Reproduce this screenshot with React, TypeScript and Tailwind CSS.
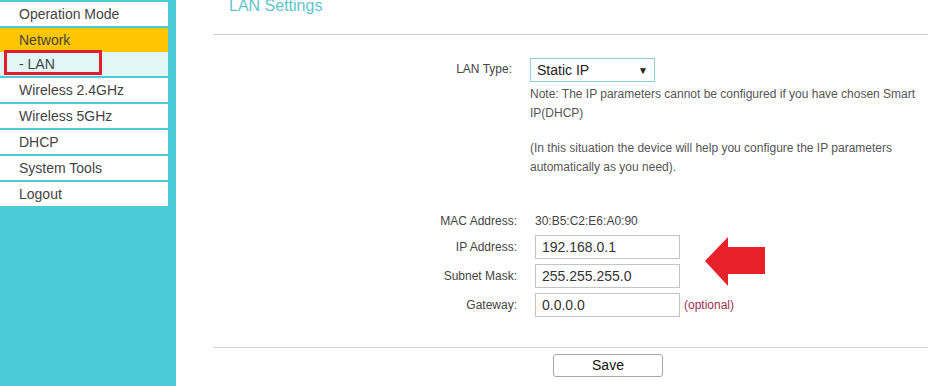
import React from 'react';

const menu = [
  { label: 'Operation Mode', kind: 'item' },
  { label: 'Network', kind: 'active' },
  { label: '- LAN', kind: 'sub' },
  { label: 'Wireless 2.4GHz', kind: 'item' },
  { label: 'Wireless 5GHz', kind: 'item' },
  { label: 'DHCP', kind: 'item' },
  { label: 'System Tools', kind: 'item' },
  { label: 'Logout', kind: 'item' },
];

function Sidebar() {
  return (
    <aside className="relative w-[176px] shrink-0 bg-[#4acbd6] pt-[2px] text-[14px]">
      <ul className="w-[168px]">
        {menu.map((m) => (
          <li
            key={m.label}
            className={
              m.kind === 'active'
                ? 'h-[24px] mt-[2px] pl-[19px] flex items-center bg-[#ffc600] text-[#444]'
                : m.kind === 'sub'
                ? 'h-[24px] pl-[19px] flex items-center bg-[#e2f6f8] text-[#444]'
                : 'h-[24px] mt-[2px] first:mt-0 pl-[19px] flex items-center bg-white text-[#444]'
            }
          >
            {m.label}
          </li>
        ))}
      </ul>
      {/* highlight box around the LAN entry */}
      <div className="absolute left-[4px] top-[50px] w-[98px] h-[25px] border-[3px] border-[#e0202e]" />
    </aside>
  );
}

function TextInput({ value }: { value: string }) {
  return (
    <div className="w-[145px] h-[24px] border border-[#c4c4c4] bg-white pl-[6px] flex items-center text-[14px] text-[#333]">
      {value}
    </div>
  );
}

function Row({ label, children, className = '' }: { label: string; children: React.ReactNode; className?: string }) {
  return (
    <div className={'flex items-center ' + className}>
      <div className="w-[304px] text-right text-[12px] text-[#444]">{label}</div>
      <div className="ml-[18px] flex items-center">{children}</div>
    </div>
  );
}

export default function App() {
  return (
    <div
      className="relative flex w-[928px] h-[386px] overflow-hidden bg-white"
      style={{ fontFamily: '"Liberation Sans", Arial, sans-serif' }}
    >
      <Sidebar />
      <main className="relative flex-1 pl-[37px]">
        <h1 className="pl-[16px] -mt-[7px] h-[42px] text-[16px] text-[#5ec5cd] leading-[26px] border-b border-[#cfcfcf]">
          LAN Settings
        </h1>

        <div className="flex items-start mt-[23px]">
          <div className="w-[299px] text-right text-[12px] text-[#444] leading-[23px]">LAN Type:</div>
          <div className="ml-[18px] w-[390px]">
            <div className="w-[125px] h-[24px] border border-[#8dd0d6] flex items-center justify-between pl-[6px] pr-[6px] text-[14px] text-[#222]">
              <span>Static IP</span>
              <span className="text-[10px]">▼</span>
            </div>
            <p className="mt-[3px] text-[12px] leading-[19px] text-[#555]">
              Note: The IP parameters cannot be configured if you have chosen Smart IP(DHCP)
            </p>
            <p className="mt-[16px] text-[12px] leading-[19px] text-[#555]">
              (In this situation the device will help you configure the IP parameters automatically as you need).
            </p>
          </div>
        </div>

        <Row label="MAC Address:" className="mt-[35px] h-[18px]">
          <span className="text-[12px] text-[#444]">30:B5:C2:E6:A0:90</span>
        </Row>
        <Row label="IP Address:" className="mt-[5px]">
          <TextInput value="192.168.0.1" />
        </Row>
        <Row label="Subnet Mask:" className="mt-[5px]">
          <TextInput value="255.255.255.0" />
        </Row>
        <Row label="Gateway:" className="mt-[5px]">
          <TextInput value="0.0.0.0" />
          <span className="ml-[4px] text-[12px] text-[#a0304f]">(optional)</span>
        </Row>

        <div className="mt-[30px] border-t border-[#cfcfcf] pt-[5px] pl-[340px]">
          <button className="w-[110px] h-[23px] border border-[#a8a8a8] rounded-[3px] bg-white text-[14px] text-[#111]">
            Save
          </button>
        </div>

        {/* red arrow pointing at the address fields */}
        <svg className="absolute left-[528px] top-[236px]" width="62" height="52" viewBox="0 0 62 52">
          <path d="M1 25 L24 1 L24 11 L61 11 L61 38 L24 38 L24 50 Z" fill="#e8202a" />
        </svg>
      </main>
    </div>
  );
}
